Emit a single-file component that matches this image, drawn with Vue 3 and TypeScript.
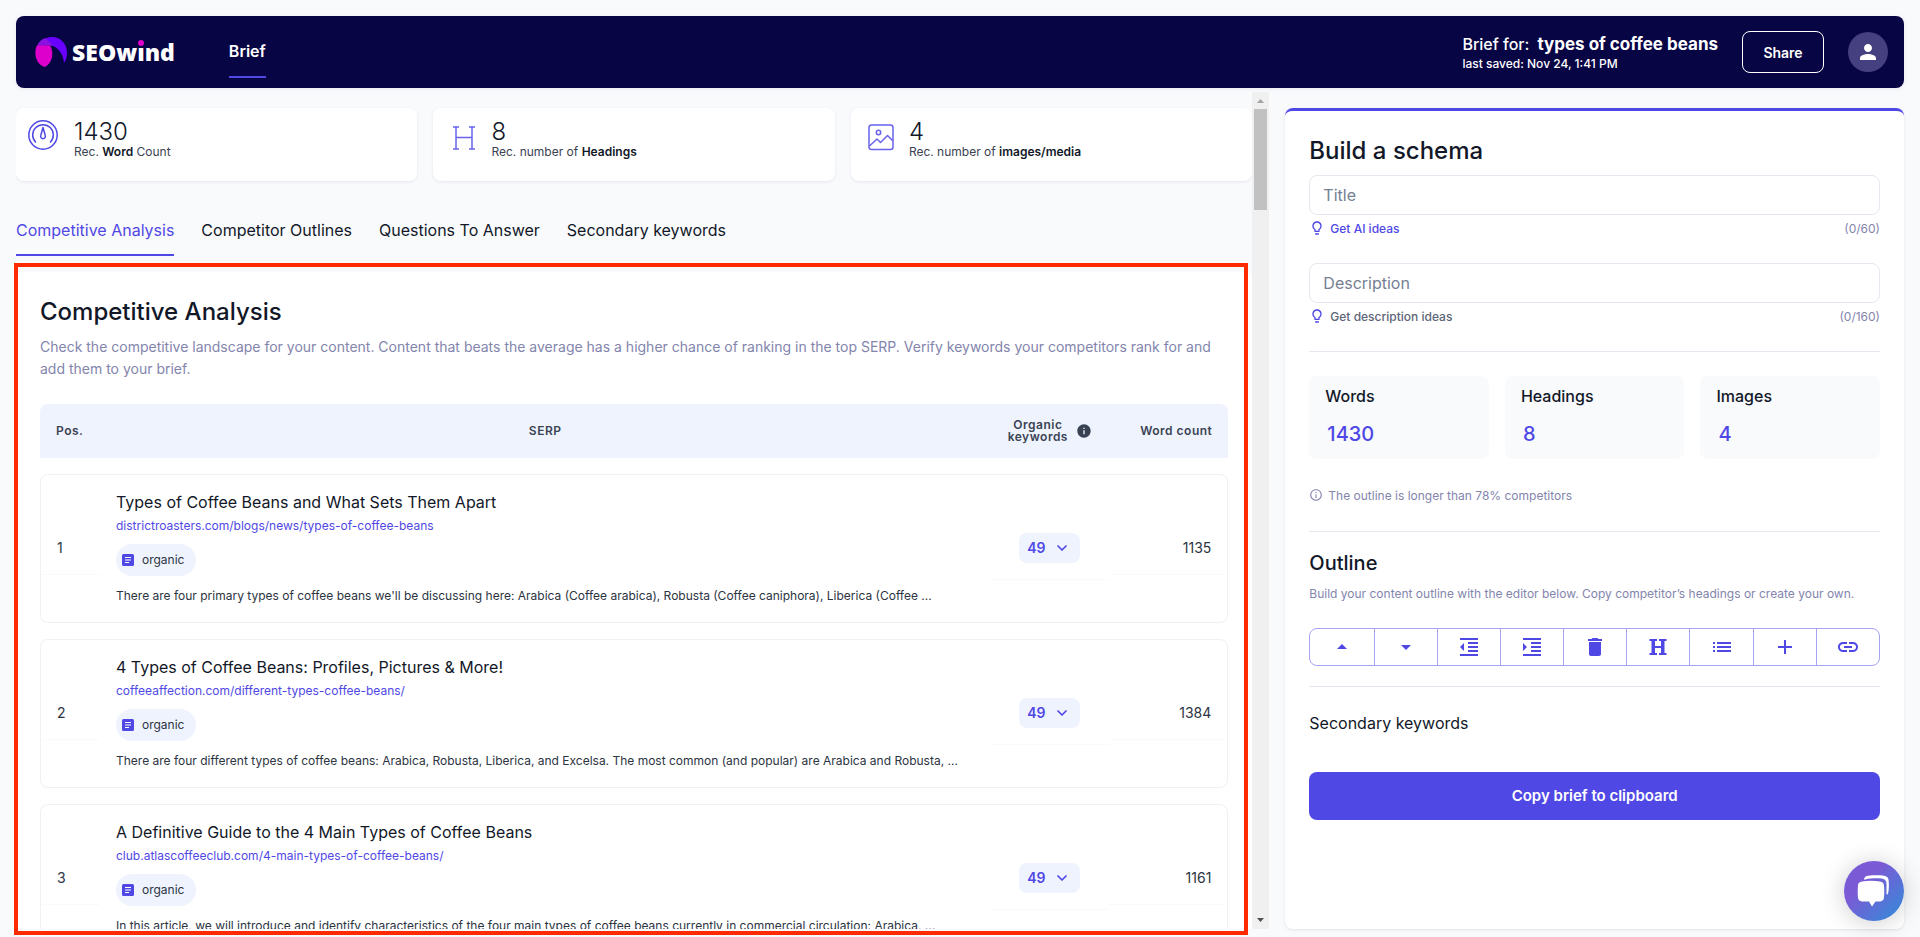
<script setup lang="ts">
import { ref } from 'vue'

interface Stat { icon: string; value: number; lead: string; strong: string; tail: string }
interface SerpRow { pos: number; title: string; url: string; text: string; keywords: number; words: number }

const stats: Stat[] = [
  { icon: 'gauge', value: 1430, lead: 'Rec. ', strong: 'Word', tail: ' Count' },
  { icon: 'heading', value: 8, lead: 'Rec. number of ', strong: 'Headings', tail: '' },
  { icon: 'image', value: 4, lead: 'Rec. number of ', strong: 'images/media', tail: '' },
]

const tabs: string[] = ['Competitive Analysis', 'Competitor Outlines', 'Questions To Answer', 'Secondary keywords']
const activeTab = ref<string>(tabs[0])

const rows: SerpRow[] = [
  {
    pos: 1,
    title: 'Types of Coffee Beans and What Sets Them Apart',
    url: 'districtroasters.com/blogs/news/types-of-coffee-beans',
    text: "There are four primary types of coffee beans we'll be discussing here: Arabica (Coffee arabica), Robusta (Coffee caniphora), Liberica (Coffee ...",
    keywords: 49,
    words: 1135,
  },
  {
    pos: 2,
    title: '4 Types of Coffee Beans: Profiles, Pictures & More!',
    url: 'coffeeaffection.com/different-types-coffee-beans/',
    text: 'There are four different types of coffee beans: Arabica, Robusta, Liberica, and Excelsa. The most common (and popular) are Arabica and Robusta, ...',
    keywords: 49,
    words: 1384,
  },
  {
    pos: 3,
    title: 'A Definitive Guide to the 4 Main Types of Coffee Beans',
    url: 'club.atlascoffeeclub.com/4-main-types-of-coffee-beans/',
    text: 'In this article, we will introduce and identify characteristics of the four main types of coffee beans currently in commercial circulation: Arabica, ...',
    keywords: 49,
    words: 1161,
  },
]

const title = ref('')
const description = ref('')

const totals = [
  { label: 'Words', value: 1430 },
  { label: 'Headings', value: 8 },
  { label: 'Images', value: 4 },
]

const tools = [
  { name: 'Move up', path: 'M7 14l5-5 5 5z' },
  { name: 'Move down', path: 'M7 10l5 5 5-5z' },
  { name: 'Decrease indent', path: 'M11 17h10v-2H11v2zm-8-5l4 4V8l-4 4zm0 9h18v-2H3v2zM3 3v2h18V3H3zm8 6h10V7H11v2zm0 4h10v-2H11v2z' },
  { name: 'Increase indent', path: 'M3 21h18v-2H3v2zM3 8v8l4-4-4-4zm8 9h10v-2H11v2zM3 3v2h18V3H3zm8 6h10V7H11v2zm0 4h10v-2H11v2z' },
  { name: 'Delete', path: 'M6 19c0 1.1.9 2 2 2h8c1.1 0 2-.9 2-2V7H6v12zM19 4h-3.5l-1-1h-5l-1 1H5v2h14V4z' },
  { name: 'Heading', path: 'M3.500 4H11v2H9v5h6V6h-2V4h7.500v2h-2v12h2v2H13v-2h2v-5H9v5h2v2H3.500v-2h2V6h-2z' },
  { name: 'List', path: 'M3 13h2v-2H3v2zm0 4h2v-2H3v2zm0-8h2V7H3v2zm4 4h14v-2H7v2zm0 4h14v-2H7v2zM7 7v2h14V7H7z' },
  { name: 'Add', path: 'M19 13h-6v6h-2v-6H5v-2h6V5h2v6h6v2z' },
  { name: 'Link', path: 'M3.900 12c0-1.710 1.390-3.100 3.100-3.100h4V7H7c-2.760 0-5 2.240-5 5s2.240 5 5 5h4v-1.900H7c-1.710 0-3.100-1.390-3.100-3.100zM8 13h8v-2H8v2zm9-6h-4v1.900h4c1.710 0 3.100 1.390 3.100 3.100s-1.390 3.100-3.100 3.100h-4V17h4c2.760 0 5-2.240 5-5s-2.240-5-5-5z' },
]
</script>

<template>
  <div class="page">
    <header class="topbar">
      <a class="logo" href="#">
        <svg width="34" height="32" viewBox="0 0 34 32" aria-hidden="true">
          <path d="M4 8C8 3 13 1 18 1c9 0 15 7 15 16 0 4-1 7-3 10-.500-8-5-16-14-18z" fill="#6a00ff" />
          <path d="M3 10C6 4 9 2.500 12 2.500l7 7z" fill="#8a12e0" />
          <path d="M3 9.500h13c2 3 2.500 6 2.200 10-.400 5-3.200 9.500-7.700 11.500C5 29 2 24 1.500 19c-.300-4 0-7 1.500-9.500z" fill="#dd00cc" />
        </svg>
        <span class="logo-text">SEOw<span class="logo-i">ı<i class="logo-dot"></i></span>nd</span>
      </a>
      <nav class="topnav"><a class="topnav-link" href="#">Brief</a></nav>
      <div class="brief-info">
        <div class="brief-line"><span class="brief-label">Brief for:</span><span class="brief-name">types of coffee beans</span></div>
        <div class="brief-saved">last saved: Nov 24, 1:41 PM</div>
      </div>
      <button class="share" type="button">Share</button>
      <button class="avatar" type="button" aria-label="Account">
        <svg width="24" height="24" viewBox="0 0 24 24"><path fill="#fff" d="M12 12c2.210 0 4-1.790 4-4s-1.790-4-4-4-4 1.790-4 4 1.790 4 4 4zm0 2c-2.670 0-8 1.340-8 4v2h16v-2c0-2.660-5.330-4-8-4z" /></svg>
      </button>
    </header>

    <main class="columns">
      <section class="left">
        <div class="scroll">
          <div class="stats">
            <div v-for="s in stats" :key="s.icon" class="stat">
              <div class="stat-icon">
                <svg v-if="s.icon === 'gauge'" width="32" height="32" viewBox="0 0 32 32" fill="none" stroke="#5048e5" stroke-width="1.500" stroke-linecap="round">
                  <circle cx="16" cy="16" r="14.200" />
                  <path d="M8.500 23a10.300 10.300 0 1 1 15 0" />
                  <path d="M16 8.500l-2.200 7.800a2.400 2.400 0 1 0 4.400 0z" stroke-linejoin="round" />
                </svg>
                <svg v-else-if="s.icon === 'heading'" width="32" height="32" viewBox="0 0 32 32" fill="none" stroke="#6a63ea" stroke-width="1.500">
                  <path d="M9 8h6M25 8h6M9 30h6M25 30h6M12 8v22M28 8v22M12 18.500h16" />
                </svg>
                <svg v-else width="32" height="32" viewBox="0 0 32 32" fill="none" stroke="#6a63ea" stroke-width="1.500" stroke-linejoin="round">
                  <rect x="7" y="6" width="24" height="24.500" rx="2.500" />
                  <circle cx="16.500" cy="13.500" r="2.200" />
                  <path d="M7.500 27l7.500-7 3.500 3.500 7-7 5.500 5.500" />
                </svg>
              </div>
              <div>
                <div class="stat-value">{{ s.value }}</div>
                <div class="stat-label">{{ s.lead }}<b>{{ s.strong }}</b>{{ s.tail }}</div>
              </div>
            </div>
          </div>

          <div class="tabs" role="tablist">
            <button v-for="t in tabs" :key="t" type="button" role="tab" class="tab" :class="{ active: t === activeTab }" :aria-selected="t === activeTab" @click="activeTab = t">{{ t }}</button>
          </div>

          <div class="card">
            <h2 class="card-title">Competitive Analysis</h2>
            <p class="card-text">Check the competitive landscape for your content. Content that beats the average has a higher chance of ranking in the top SERP. Verify keywords your competitors rank for and add them to your brief.</p>
            <table class="serp">
              <colgroup><col class="c-pos" /><col /><col class="c-num" /><col class="c-num" /></colgroup>
              <thead>
                <tr>
                  <th>Pos.</th>
                  <th>SERP</th>
                  <th>
                    <div class="th-organic">
                      <span>Organic<br />keywords</span>
                      <svg width="16" height="16" viewBox="0 0 24 24"><path fill="#374151" d="M12 2C6.480 2 2 6.480 2 12s4.480 10 10 10 10-4.480 10-10S17.520 2 12 2zm1 15h-2v-6h2v6zm0-8h-2V7h2v2z" /></svg>
                    </div>
                  </th>
                  <th>Word count</th>
                </tr>
              </thead>
              <tbody>
                <tr v-for="r in rows" :key="r.pos">
                  <td class="td-pos"><div class="cell">{{ r.pos }}</div></td>
                  <td class="td-serp">
                    <div class="row-title">{{ r.title }}</div>
                    <a class="row-url" href="#">{{ r.url }}</a>
                    <div class="chip">
                      <svg width="14" height="14" viewBox="0 0 14 14"><rect x="1" y="1" width="12" height="12" rx="1.500" fill="#5048e5" /><path d="M4 4.500h6M4 7h6M4 9.500h4" stroke="#fff" stroke-width="1.200" /></svg>
                      organic
                    </div>
                    <div class="row-text">{{ r.text }}</div>
                  </td>
                  <td class="td-kw">
                    <div class="cell">
                      <button class="kw" type="button">{{ r.keywords }}
                        <svg width="10" height="10" viewBox="0 0 10 10" fill="none" stroke="#5048e5" stroke-width="1.700" stroke-linecap="round" stroke-linejoin="round"><path d="M1 3l4 4 4-4" /></svg>
                      </button>
                    </div>
                  </td>
                  <td class="td-words"><div class="cell">{{ r.words }}</div></td>
                </tr>
              </tbody>
            </table>
          </div>
        </div>
        <div class="bar" aria-hidden="true">
          <svg class="bar-arrow" viewBox="0 0 17 17"><path d="M5 11l3.500-4 3.500 4z" fill="#a3a3a3" /></svg>
          <div class="bar-thumb"></div>
          <svg class="bar-arrow bar-down" viewBox="0 0 17 17"><path d="M5 6l3.500 4L12 6z" fill="#505050" /></svg>
        </div>
        <div class="highlight"></div>
      </section>

      <aside class="panel">
        <h2 class="panel-title">Build a schema</h2>
        <input v-model="title" class="field" type="text" placeholder="Title" aria-label="Title" />
        <div class="hint">
          <button type="button" class="hint-link on">
            <svg width="16" height="16" viewBox="0 0 24 24"><path fill="#5048e5" d="M9 21c0 .500.400 1 1 1h4c.600 0 1-.500 1-1v-1H9v1zm3-19C8.100 2 5 5.100 5 9c0 2.400 1.200 4.500 3 5.700V17c0 .500.400 1 1 1h6c.600 0 1-.500 1-1v-2.300c1.800-1.300 3-3.400 3-5.700 0-3.900-3.100-7-7-7zm2.900 11.100l-.900.600V16h-4v-2.300l-.900-.600C7.800 12.200 7 10.600 7 9c0-2.800 2.200-5 5-5s5 2.200 5 5c0 1.600-.800 3.200-2.100 4.100z" /></svg>
            Get AI ideas
          </button>
          <span>(0/60)</span>
        </div>
        <input v-model="description" class="field" type="text" placeholder="Description" aria-label="Description" />
        <div class="hint">
          <button type="button" class="hint-link">
            <svg width="16" height="16" viewBox="0 0 24 24"><path fill="#5048e5" d="M9 21c0 .500.400 1 1 1h4c.600 0 1-.500 1-1v-1H9v1zm3-19C8.100 2 5 5.100 5 9c0 2.400 1.200 4.500 3 5.700V17c0 .500.400 1 1 1h6c.600 0 1-.500 1-1v-2.300c1.800-1.300 3-3.400 3-5.700 0-3.900-3.100-7-7-7zm2.900 11.100l-.900.600V16h-4v-2.300l-.900-.600C7.800 12.200 7 10.600 7 9c0-2.800 2.200-5 5-5s5 2.200 5 5c0 1.600-.800 3.200-2.100 4.100z" /></svg>
            Get description ideas
          </button>
          <span>(0/160)</span>
        </div>
        <hr class="rule" />
        <div class="totals">
          <div v-for="t in totals" :key="t.label" class="total">
            <div class="total-label">{{ t.label }}</div>
            <div class="total-value">{{ t.value }}</div>
          </div>
        </div>
        <div class="note">
          <svg width="14" height="14" viewBox="0 0 24 24"><path fill="#8588b0" d="M11 7h2v2h-2zm0 4h2v6h-2zm1-9C6.480 2 2 6.480 2 12s4.480 10 10 10 10-4.480 10-10S17.520 2 12 2zm0 18c-4.410 0-8-3.590-8-8s3.590-8 8-8 8 3.590 8 8-3.590 8-8 8z" /></svg>
          The outline is longer than 78% competitors
        </div>
        <hr class="rule" />
        <h3 class="outline-title">Outline</h3>
        <p class="outline-text">Build your content outline with the editor below. Copy competitor’s headings or create your own.</p>
        <div class="toolbar">
          <button v-for="t in tools" :key="t.name" type="button" class="tool" :aria-label="t.name">
            <svg width="24" height="24" viewBox="0 0 24 24"><path fill="#5048e5" :d="t.path" /></svg>
          </button>
        </div>
        <hr class="rule" />
        <div class="secondary">Secondary keywords</div>
        <button class="copy" type="button">Copy brief to clipboard</button>
      </aside>
    </main>

    <button class="chat" type="button" aria-label="Open chat">
      <svg width="34" height="38" viewBox="0 0 34 38" fill="#fff">
        <path d="M7 7c.500-2 2-3 4-3.300 6-.600 12-.600 16 0 3 .300 4.500 2 4.700 5 .300 5 .300 9-.700 13-.300 1-1.500 1-1.500 0V12c0-3.500-2-5.300-5-5.500-6-.300-11-.300-16 1-.800.200-1.500.300-1.500-.500z" />
        <path d="M5 9.500c6-.900 12-.900 18 0 2.500.300 3.800 1.500 4 4 .400 4.500.400 8 0 12-.200 2.500-1.500 3.700-4 4h-4.500L15 34.500l-3-5H5c-2.500-.300-3.800-1.500-4-4-.400-4-.400-7.500 0-12 .200-2.500 1.500-3.700 4-4z" />
      </svg>
    </button>
  </div>
</template>

<style>
body { background: #f9fafc; }
</style>

<style scoped>
* { box-sizing: border-box; }
button { font: inherit; cursor: pointer; border: 0; background: none; padding: 0; color: inherit; }
svg { flex: none; display: block; }
h2, h3, p { margin: 0; font-weight: 500; }
.page { height: 100vh; display: flex; flex-direction: column; padding: 16px 16px 8px; font-family: Inter, "Liberation Sans", sans-serif; color: #121828; overflow: hidden; }

.topbar { height: 72px; flex: none; display: flex; align-items: center; padding: 0 16px 0 18px; border-radius: 8px; background: #080545; color: #fff; box-shadow: 0 1px 4px rgba(100, 116, 139, 0.12); }
.logo { display: flex; align-items: center; gap: 4px; color: #fff; text-decoration: none; }
.logo-text { font: 800 23px/32px "Open Sans", sans-serif; }
.logo-i { position: relative; }
.logo-dot { position: absolute; left: 1px; top: 4px; width: 6px; height: 6px; border-radius: 50%; background: #dd00cc; }
.topnav { margin-left: 54px; flex: 1; display: flex; align-self: stretch; align-items: flex-start; }
.topnav-link { color: #fff; text-decoration: none; font-size: 16px; line-height: 24px; font-weight: 600; padding: 23px 0 13px; border-bottom: 2px solid #5048e5; }
.brief-info { margin-right: 24px; }
.brief-line { display: flex; align-items: center; gap: 8px; line-height: 24px; }
.brief-label { font-size: 16px; font-weight: 500; }
.brief-name { font-size: 17px; font-weight: 700; }
.brief-saved { font-size: 12px; line-height: 16px; font-weight: 500; }
.share { width: 82px; height: 42px; margin-right: 24px; border: 1px solid #fff; border-radius: 8px; font-size: 14px; font-weight: 600; }
.avatar { width: 40px; height: 40px; border-radius: 50%; background: #454080; display: grid; place-items: center; }

.columns { flex: 1; min-height: 0; margin-top: 4px; display: grid; grid-template-columns: repeat(12, minmax(0, 1fr)); column-gap: 16px; }
.left { grid-column: span 8; display: flex; min-height: 0; position: relative; }
.scroll { flex: 1; min-width: 0; overflow: hidden; padding-top: 16px; }
.stats { display: grid; grid-template-columns: repeat(3, 1fr); gap: 16px; }
.stat { display: flex; gap: 15px; height: 73px; padding: 11px; background: #fff; border-radius: 8px; box-shadow: 0 1px 3px rgba(100, 116, 139, 0.14); }
.stat-icon { width: 32px; }
.stat-value { font-size: 24px; line-height: 24px; font-weight: 300; margin-top: 1px; }
.stat-label { font-size: 12px; line-height: 16px; color: #3b4252; }
.stat-label b { font-weight: 600; color: #121828; }

.tabs { display: flex; gap: 27px; margin-top: 23px; }
.tab { height: 52px; padding-top: 2px; font-size: 16px; line-height: 24px; border-bottom: 2px solid transparent; }
.tab.active { color: #5048e5; border-color: #5048e5; }

.card { margin-top: 16px; padding: 24px; background: #fff; border-radius: 8px; }
.card-title { font-size: 24px; line-height: 32px; }
.card-text { margin-top: 8px; font-size: 14px; line-height: 22px; color: #8385ad; font-weight: 400; }
.serp { width: 100%; margin-top: 8px; table-layout: fixed; border-collapse: separate; border-spacing: 0 16px; }
.c-pos { width: 60px; }
.c-num { width: 119px; }
th { height: 54px; padding: 0 16px; background: #eef3fe; font-size: 12px; line-height: 12px; font-weight: 600; color: #3b4354; letter-spacing: 0.5px; text-align: center; white-space: nowrap; }
th:first-child { border-radius: 8px 0 0 0; text-align: left; }
th:last-child { border-radius: 0 8px 0 0; text-align: right; }
.th-organic { display: flex; align-items: center; justify-content: center; gap: 8px; }
td { height: 149px; padding: 0; border: solid #f0f1f4; border-width: 1px 0; font-size: 14px; line-height: 20px; color: #2c3442; vertical-align: middle; }
td:first-child { border-left-width: 1px; border-radius: 8px 0 0 8px; }
td:last-child { border-right-width: 1px; border-radius: 0 8px 8px 0; }
.cell { padding: 16px; border-bottom: 1px solid #fafafb; }
.td-words .cell { text-align: right; }
.td-kw .cell { display: flex; justify-content: center; }
.td-serp { padding: 0 16px 2px; }
.row-title { font-size: 16px; line-height: 24px; color: #121828; }
.row-url { display: block; margin-top: 2px; font-size: 12px; line-height: 20px; color: #5048e5; text-decoration: none; }
.chip { display: inline-flex; align-items: center; gap: 7px; height: 32px; margin-top: 8px; padding: 0 12px 0 5px; border-radius: 16px; background: #eef3fe; font-size: 12px; vertical-align: top; }
.row-text { margin-top: 10px; font-size: 12px; line-height: 20px; white-space: nowrap; }
.kw { display: inline-flex; align-items: center; gap: 12px; height: 30px; padding: 0 13px 0 8px; border-radius: 8px; background: #eef3fe; color: #5048e5; font-weight: 600; }

.bar { width: 17px; background: #f0f0f0; display: flex; flex-direction: column; align-items: center; }
.bar-arrow { width: 17px; height: 17px; }
.bar-thumb { width: 13px; height: 101px; background: #c1c1c1; }
.bar-down { margin-top: auto; }
.highlight { position: absolute; left: -2px; right: 21px; top: 171px; bottom: -6px; border: 4px solid #ff2a00; pointer-events: none; }

.panel { grid-column: span 4; margin-top: 16px; padding: 25px 24px 24px; background: #fff; border-top: 3px solid #5048e5; border-radius: 8px; box-shadow: 0 1px 3px rgba(100, 116, 139, 0.16); }
.panel-title { font-size: 24px; line-height: 30px; }
.field { display: block; width: 100%; height: 40px; margin-top: 9px; padding: 0 13px; border: 1px solid #e6e8f0; border-radius: 8px; background: #fff; font: 400 16px/24px Inter, sans-serif; color: #121828; }
.field::placeholder { color: #758092; opacity: 1; }
.hint { display: flex; justify-content: space-between; align-items: center; height: 24px; margin-top: 1px; margin-bottom: 23px; font-size: 12px; color: #8385ad; }
.hint-link { display: flex; align-items: center; gap: 5px; font-weight: 500; color: #5d6576; }
.hint-link.on { color: #5048e5; }
.hint + .field { margin-top: 0; }
.rule { margin: 0; border: 0; border-top: 1px solid #e6e8f0; }
.totals { display: grid; grid-template-columns: repeat(3, 1fr); gap: 16px; margin-top: 24px; }
.total { height: 83px; padding: 8px 16px; border-radius: 8px; background: #f9fafc; }
.total-label { font-size: 16px; line-height: 24px; font-weight: 500; }
.total-value { margin: 12px 0 0 2px; font-size: 20px; line-height: 28px; font-weight: 500; color: #5048e5; }
.note { display: flex; align-items: center; gap: 5px; margin: 26px 0; height: 20px; font-size: 12px; color: #8385ad; }
.outline-title { margin-top: 16px; font-size: 20px; line-height: 30px; }
.outline-text { margin-top: 6px; font-size: 12px; line-height: 20px; font-weight: 400; color: #8385ad; white-space: nowrap; }
.toolbar { display: grid; grid-template-columns: repeat(9, 1fr); height: 38px; margin: 24px 0 20px; border: 1px solid #a7a3f2; border-radius: 8px; }
.tool { display: grid; place-items: center; }
.tool + .tool { border-left: 1px solid #a7a3f2; }
.secondary { margin-top: 24px; font-size: 16px; line-height: 24px; }
.copy { display: block; width: 100%; height: 48px; margin-top: 37px; padding-bottom: 2px; border-radius: 8px; background: #5048e5; color: #fff; font-size: 15px; font-weight: 600; }

.chat { position: fixed; right: 16px; bottom: 16px; width: 60px; height: 60px; border-radius: 50%; display: grid; place-items: center; background: linear-gradient(135deg, #7a5bd5 35%, #3a86d8 90%); box-shadow: 0 2px 24px rgba(0, 0, 0, 0.2); }
</style>
